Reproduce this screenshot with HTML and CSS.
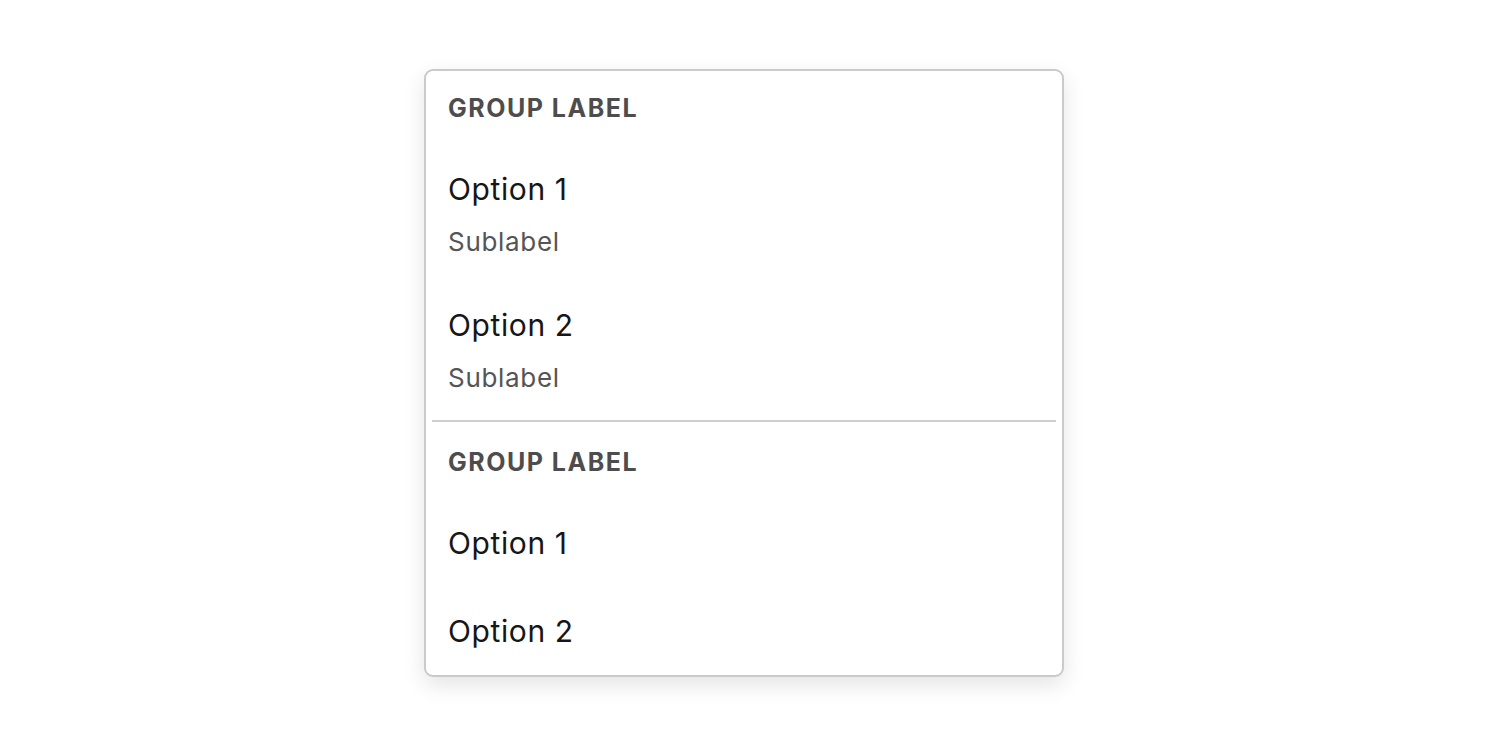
FILE: index.html
```html
<!DOCTYPE html>
<html lang="en">
<head>
<meta charset="utf-8">
<title>Menu</title>
<link rel="stylesheet" href="styles.css">
</head>
<body>
<div class="stage">
  <div class="menu">
    <div class="group">
      <div class="group-label">GROUP LABEL</div>
      <div class="option with-sub">
        <div class="opt-label">Option 1</div>
        <div class="opt-sub">Sublabel</div>
      </div>
      <div class="option with-sub">
        <div class="opt-label">Option 2</div>
        <div class="opt-sub">Sublabel</div>
      </div>
    </div>
    <div class="divider"></div>
    <div class="group">
      <div class="group-label second">GROUP LABEL</div>
      <div class="option">
        <div class="opt-label">Option 1</div>
      </div>
      <div class="option">
        <div class="opt-label">Option 2</div>
      </div>
    </div>
  </div>
</div>
</body>
</html>
```

FILE: styles.css
```css
html, body {
  margin: 0;
  padding: 0;
  background: #ffffff;
}
body {
  font-family: "Inter", "Noto Sans", sans-serif;
  color: #161616;
}
.stage {
  display: flex;
  justify-content: center;
  padding-top: 69px;
  padding-bottom: 40px;
}
.menu {
  width: 636px;
  border: 2px solid #cacaca;
  border-radius: 9px;
  background: #fff;
  box-shadow: 0 8px 22px rgba(0, 0, 0, 0.11);
  display: flex;
  flex-direction: column;
}
.group {
  display: flex;
  flex-direction: column;
}
.group-label {
  height: 74px;
  display: flex;
  align-items: center;
  padding: 0 22px;
  font-size: 25px;
  font-weight: 700;
  letter-spacing: 1.5px;
  color: #4d4d4d;
}
.group-label.second {
  height: 77px;
  padding-top: 3px;
  box-sizing: border-box;
}
.option {
  height: 88px;
  display: flex;
  flex-direction: column;
  justify-content: center;
  padding: 0 22px;
}
.option.with-sub {
  height: 136px;
  justify-content: flex-start;
  box-sizing: border-box;
  padding-top: 24px;
}
.opt-label {
  font-size: 30px;
  line-height: 40px;
  font-weight: 400;
  letter-spacing: 0.6px;
  color: #161616;
}
.opt-sub {
  margin-top: 17px;
  font-size: 26px;
  line-height: 32px;
  letter-spacing: 0.7px;
  color: #555555;
}
.divider {
  height: 2px;
  background: #cfcfcf;
  margin: 3px 6px 0;
}
```
